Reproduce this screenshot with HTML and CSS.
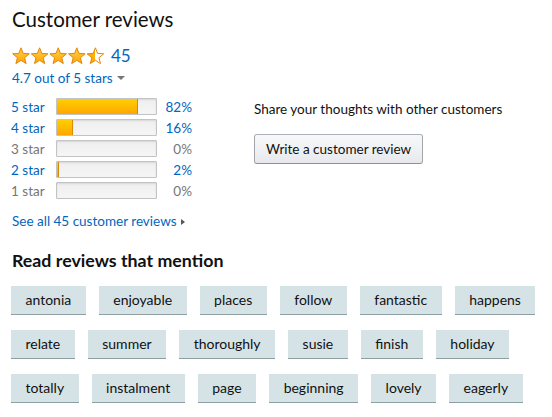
FILE: index.html
```html
<!DOCTYPE html>
<html lang="en">

<head>
    <meta charset="UTF-8">
    <meta name="viewport" content="width=device-width, initial-scale=1.0">
    <title>Customer reviews</title>
    <link rel="stylesheet" href="styles.css">
</head>

<body>
    <div class="reviews">
        <!-- Summary + write review -->
        <div class="top">
            <div class="summary">
                <h2>Customer reviews</h2>
                <div class="rating">
                    <svg class="stars" width="94" height="18" viewBox="0 0 94 18">
                        <defs>
                            <linearGradient id="gold" x1="0" y1="0" x2="0" y2="1">
                                <stop offset="0" stop-color="#ffd24a" />
                                <stop offset="1" stop-color="#ffa500" />
                            </linearGradient>
                            <linearGradient id="half" x1="0" y1="0" x2="1" y2="0">
                                <stop offset="0.5" stop-color="#ffb000" />
                                <stop offset="0.5" stop-color="#fff" />
                            </linearGradient>
                            <path id="star" d="M9 .8 L11.2 6.4 L17.3 6.8 L12.6 10.7 L14.1 16.6 L9 13.3 L3.9 16.6 L5.4 10.7 L.7 6.8 L6.8 6.4Z" />
                        </defs>
                        <use href="#star" x="0" fill="url(#gold)" stroke="#e3850f" stroke-width="1" stroke-linejoin="round" />
                        <use href="#star" x="18.6" fill="url(#gold)" stroke="#e3850f" stroke-width="1" stroke-linejoin="round" />
                        <use href="#star" x="37.2" fill="url(#gold)" stroke="#e3850f" stroke-width="1" stroke-linejoin="round" />
                        <use href="#star" x="55.8" fill="url(#gold)" stroke="#e3850f" stroke-width="1" stroke-linejoin="round" />
                        <use href="#star" x="74.4" fill="url(#half)" stroke="#e3850f" stroke-width="1" stroke-linejoin="round" />
                    </svg>
                    <a href="#" class="count">45</a>
                </div>
                <a href="#" class="out-of">4.7 out of 5 stars <span class="caret"></span></a>

                <table class="histogram">
                    <tr>
                        <td><a href="#">5 star</a></td>
                        <td><div class="bar"><div class="fill" style="width: 82%"></div></div></td>
                        <td class="pct"><a href="#">82%</a></td>
                    </tr>
                    <tr>
                        <td><a href="#">4 star</a></td>
                        <td><div class="bar"><div class="fill" style="width: 16%"></div></div></td>
                        <td class="pct"><a href="#">16%</a></td>
                    </tr>
                    <tr class="empty">
                        <td>3 star</td>
                        <td><div class="bar"></div></td>
                        <td class="pct">0%</td>
                    </tr>
                    <tr>
                        <td><a href="#">2 star</a></td>
                        <td><div class="bar"><div class="fill" style="width: 2%"></div></div></td>
                        <td class="pct"><a href="#">2%</a></td>
                    </tr>
                    <tr class="empty">
                        <td>1 star</td>
                        <td><div class="bar"></div></td>
                        <td class="pct">0%</td>
                    </tr>
                </table>

                <a href="#" class="see-all">See all 45 customer reviews <span class="arrow"></span></a>
            </div>

            <div class="share">
                <p>Share your thoughts with other customers</p>
                <button type="button" class="btn">Write a customer review</button>
            </div>
        </div>

        <!-- Mentions -->
        <h3>Read reviews that mention</h3>
        <div class="tags">
            <a href="#" class="tag">antonia</a>
            <a href="#" class="tag">enjoyable</a>
            <a href="#" class="tag">places</a>
            <a href="#" class="tag">follow</a>
            <a href="#" class="tag">fantastic</a>
            <a href="#" class="tag">happens</a>
            <a href="#" class="tag">relate</a>
            <a href="#" class="tag">summer</a>
            <a href="#" class="tag">thoroughly</a>
            <a href="#" class="tag">susie</a>
            <a href="#" class="tag">finish</a>
            <a href="#" class="tag">holiday</a>
            <a href="#" class="tag">totally</a>
            <a href="#" class="tag">instalment</a>
            <a href="#" class="tag">page</a>
            <a href="#" class="tag">beginning</a>
            <a href="#" class="tag">lovely</a>
            <a href="#" class="tag">eagerly</a>
        </div>
    </div>
</body>

</html>
```

FILE: styles.css
```css
/* General */
body {
    font-family: 'Lato', 'Liberation Sans', sans-serif;
    margin: 0;
    padding: 0;
    background: #fff;
    color: #111;
    font-size: 13.5px;
}

a {
    color: #0066c0;
    text-decoration: none;
}

.reviews {
    padding: 5px 11px 0 11px;
}

.top {
    display: flex;
}

.summary {
    width: 243px;
}

h2 {
    font-size: 20.5px;
    font-weight: normal;
    margin: 0 0 0 1px;
    line-height: 28px;
}

.rating {
    display: flex;
    align-items: center;
    margin-top: 13px;
    margin-left: 1px;
}

.stars {
    display: block;
}

.count {
    font-size: 17px;
    margin-left: 5px;
    line-height: 20px;
}

.out-of {
    display: inline-block;
    margin: 3px 0 0 1px;
    line-height: 18px;
}

.caret {
    display: inline-block;
    width: 0;
    height: 0;
    border-left: 4px solid transparent;
    border-right: 4px solid transparent;
    border-top: 4px solid #777;
    vertical-align: 3px;
    margin-left: 1px;
}

/* Histogram */
.histogram {
    border-collapse: collapse;
    margin-top: 9px;
}

.histogram td {
    padding: 0;
    height: 21px;
}

.histogram td:first-child {
    width: 45px;
}

.empty td {
    color: #767676;
}

.bar {
    width: 99px;
    height: 15px;
    background: linear-gradient(#eee, #f6f6f6);
    border: 1px solid #c3c3c3;
    border-radius: 1px;
    box-shadow: inset 0 1px 2px rgba(0, 0, 0, 0.1);
    overflow: hidden;
}

.fill {
    height: 100%;
    box-sizing: border-box;
    background: linear-gradient(#ffce00, #ffa700);
    border-right: 1px solid #d98a00;
}

.pct {
    width: 35px;
    text-align: right;
}

.see-all {
    display: inline-block;
    margin: 12px 0 0 1px;
}

.arrow {
    display: inline-block;
    width: 0;
    height: 0;
    border-top: 3.5px solid transparent;
    border-bottom: 3.5px solid transparent;
    border-left: 4px solid #555;
    margin-left: 1px;
    vertical-align: 1px;
}

/* Share */
.share p {
    margin: 95px 0 0 0;
    line-height: 18px;
}

.btn {
    margin-top: 16px;
    height: 30px;
    padding: 0 11px;
    font-family: inherit;
    font-size: 13.5px;
    color: #111;
    background: linear-gradient(#f7f8fa, #e7e9ec);
    border: 1px solid #adb1b8;
    border-color: #adb1b8 #a2a6ac #8d9096;
    border-radius: 3px;
    cursor: pointer;
}

/* Mentions */
h3 {
    font-size: 17.8px;
    font-weight: bold;
    margin: 21px 0 0 1px;
    line-height: 20px;
}

.tags {
    display: flex;
    flex-wrap: wrap;
    gap: 15px 13px;
    margin-top: 16px;
    width: 534px;
}

.tag {
    display: block;
    height: 28px;
    line-height: 28px;
    padding: 0 14.5px;
    font-size: 14px;
    color: #111;
    background: #d5e3e6;
    border-bottom: 1px solid #8c9fa3;
}
```
